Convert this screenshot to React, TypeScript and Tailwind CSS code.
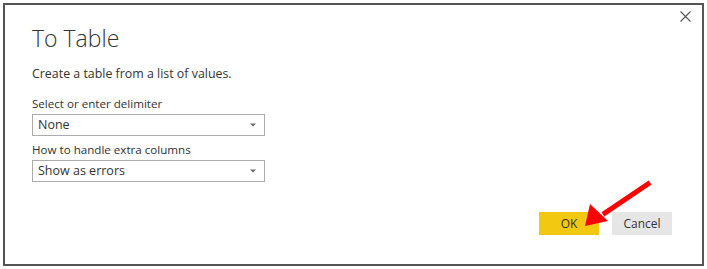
import React from 'react';

const font = { fontFamily: '"Open Sans", "Noto Sans", Arial, sans-serif' };

function Caret() {
  return (
    <svg width="6" height="4" viewBox="0 0 6 4" className="mr-[8px]">
      <path d="M0 0.5 H6 L3 3.5 Z" fill="#666" />
    </svg>
  );
}

function Select({ value }: { value: string }) {
  return (
    <div className="flex h-[22px] w-[233px] items-center justify-between border border-[#ababab] bg-white pl-[5px]">
      <span className="text-[12.5px] leading-none text-[#333]">{value}</span>
      <Caret />
    </div>
  );
}

export default function App() {
  return (
    <div className="h-[269px] w-[707px] bg-white p-[3px]" style={font}>
      <div className="relative flex h-full flex-col border-2 border-[#555] pb-[29px] pl-[27px] pr-[30px]">
        <div className="flex items-start justify-between">
          <h1 className="mt-[17px] text-[23px] font-light leading-[32px] text-[#333]">To Table</h1>
          <button className="mr-[-19px] mt-[6px] flex h-[11px] w-[11px] items-center justify-center">
            <svg width="11" height="11" viewBox="0 0 11 11">
              <path d="M0.5 0.5 L10.5 10.5 M10.5 0.5 L0.5 10.5" stroke="#555" strokeWidth="1.1" />
            </svg>
          </button>
        </div>

        <p className="mt-[11px] text-[12.4px] leading-[18px] text-[#333]">Create a table from a list of values.</p>

        <div className="mt-[12px] flex flex-col">
          <label className="text-[11.6px] leading-[18px] text-[#333]">Select or enter delimiter</label>
          <div className="mt-[1px]">
            <Select value="None" />
          </div>
          <label className="mt-[5px] text-[11.6px] leading-[18px] text-[#333]">How to handle extra columns</label>
          <div className="mt-[1px]">
            <Select value="Show as errors" />
          </div>
        </div>

        <div className="mt-auto flex justify-end gap-[13px]">
          <button className="h-[23px] w-[60px] bg-[#f2c811] text-[12px] text-[#333]">OK</button>
          <button className="h-[23px] w-[60px] bg-[#e6e6e6] text-[12px] text-[#333]">Cancel</button>
        </div>

        <svg className="pointer-events-none absolute left-[568px] top-[170px]" width="90" height="65" viewBox="0 0 90 65">
          <path d="M75 9 L32 38" stroke="#f00" strokeWidth="5" strokeLinecap="square" />
          <polygon points="12,51 17,29 35,46" fill="#f00" />
        </svg>
      </div>
    </div>
  );
}
